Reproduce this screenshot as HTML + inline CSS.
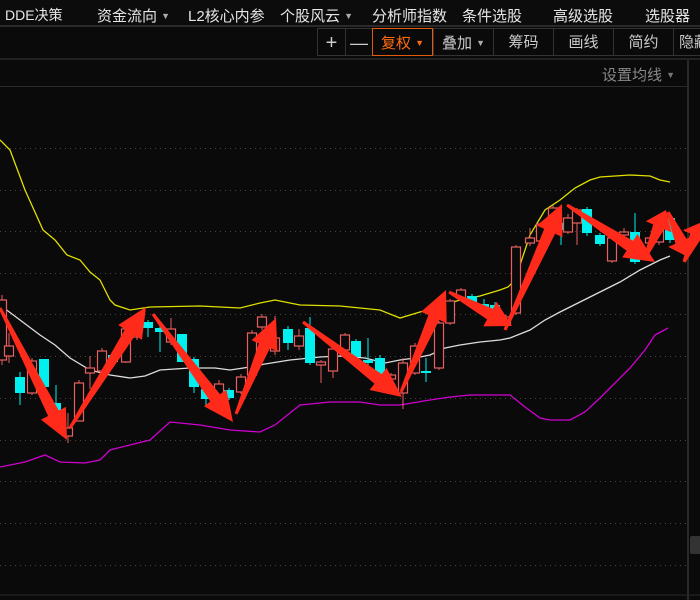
<!DOCTYPE html>
<html><head><meta charset="utf-8"><style>
html,body{margin:0;padding:0;background:#0a0a0a;width:700px;height:600px;overflow:hidden;font-family:"Liberation Sans","Noto Sans CJK SC",sans-serif;}
.top{position:absolute;left:0;top:0;width:700px;height:25px;background:#0c0c0c;border-bottom:2px solid #2a2a2a;}
.top span{position:absolute;top:5px;color:#e6e6e6;font-size:15px;white-space:nowrap;}
.tb{position:absolute;top:28px;height:28px;border:1px solid #333;border-right:none;color:#ccc;font-size:15px;line-height:28px;text-align:center;box-sizing:border-box;}
.tri{font-size:9px;vertical-align:2px;color:#aaa}
</style></head><body>
<div class="top">
<span style="left:5px;font-size:14px">DDE决策</span>
<span style="left:97px">资金流向 <b class="tri">▼</b></span>
<span style="left:188px">L2核心内参</span>
<span style="left:280px">个股风云 <b class="tri">▼</b></span>
<span style="left:372px">分析师指数</span>
<span style="left:462px">条件选股</span>
<span style="left:553px">高级选股</span>
<span style="left:645px">选股器</span>
</div>
<div class="tb" style="left:317px;width:28px;font-size:20px">+</div>
<div class="tb" style="left:345px;width:27px;font-size:18px">—</div>
<div class="tb" style="left:372px;width:61px;border:1px solid #e05a10;color:#ff6a10">复权 <b class="tri" style="color:#ff6a10">▼</b></div>
<div class="tb" style="left:433px;width:60px">叠加 <b class="tri">▼</b></div>
<div class="tb" style="left:493px;width:60px">筹码</div>
<div class="tb" style="left:553px;width:60px">画线</div>
<div class="tb" style="left:613px;width:60px">简约</div>
<div class="tb" style="left:673px;width:40px;text-align:left;padding-left:5px">隐藏</div>
<div style="position:absolute;left:0;top:58px;width:700px;height:2px;background:#222"></div>
<div style="position:absolute;left:602px;top:64px;color:#888;font-size:15px">设置均线 <b class="tri" style="color:#777">▼</b></div>
<div style="position:absolute;left:0;top:86px;width:688px;height:1px;background:#2a2a2a"></div>
<svg id="c" width="700" height="600" style="position:absolute;left:0;top:0" xmlns="http://www.w3.org/2000/svg">
<line x1="688" y1="60" x2="688" y2="600" stroke="#2a2a2a" stroke-width="2"/>
<line x1="0" y1="595" x2="700" y2="595" stroke="#2a2a2a" stroke-width="1"/>
<rect x="690" y="536" width="12" height="18" rx="2" fill="#333"/>
<g id="grid" stroke="#444" stroke-width="1" stroke-dasharray="1,4"></g>
<polyline fill="none" stroke="#e0e000" stroke-width="1.3" points="0,140 10,150 25,190 43,230 55,240 67,255 80,260 90,272 100,280 110,300 115,305 130,310 150,307 200,306 240,308 260,303 275,300 300,305 340,306 380,310 400,318 420,312 440,306 460,300 480,296 500,290 508,287 515,280 530,235 545,210 560,200 575,188 590,180 600,177 630,175 650,176 660,180 670,182"/>
<polyline fill="none" stroke="#dddddd" stroke-width="1.3" points="0,305 20,320 40,335 55,345 70,358 90,370 110,375 130,378 145,376 160,370 190,368 215,368 230,370 250,367 265,364 290,360 320,357 340,356 365,358 385,363 400,360 415,358 430,355 445,348 460,345 480,342 500,340 510,338 530,330 545,320 560,312 580,302 600,292 620,282 640,270 660,260 670,256"/>
<polyline fill="none" stroke="#d000d0" stroke-width="1.3" points="0,467 25,462 45,455 60,462 85,463 100,460 110,450 130,445 150,440 170,422 200,425 230,430 260,432 275,425 300,405 330,402 360,402 380,405 400,405 430,400 450,397 470,395 500,395 510,395 525,407 540,418 550,420 570,420 585,412 600,398 615,383 630,368 645,350 655,335 668,328"/>
<g id="cd"></g><g id="ar" fill="#ff2a1a"></g>
</svg>
<script>
var ns="http://www.w3.org/2000/svg";
function el(p,t,a){var e=document.createElementNS(ns,t);for(var k in a)e.setAttribute(k,a[k]);document.getElementById(p).appendChild(e);}
[148,190,231,273,314,356,398,440,481,523,565].forEach(function(y){el('grid','line',{x1:0,y1:y+.5,x2:686,y2:y+.5});});
var C=[[2,300,360,295,365,1],[9,346,356,333,363,1],[20,377,393,372,405,0],[32,361,393,358,395,1],[44,359,387,359,387,0],[56,403,423,385,425,0],[68,428,436,413,443,1],[79,383,421,380,421,1],[90,368,373,356,389,1],[102,351,371,348,371,1],[113,355,362,352,365,0],[126,329,362,326,363,1],[137,328,337,324,340,1],[148,322,328,320,337,0],[160,328,332,326,352,0],[171,329,342,318,345,1],[182,334,362,334,362,0],[194,359,387,357,393,0],[206,389,399,386,407,0],[219,384,399,380,400,1],[229,390,398,388,400,0],[241,377,392,374,394,1],[252,333,375,330,378,1],[262,317,327,314,330,1],[275,338,351,316,355,1],[288,329,343,326,350,0],[299,336,346,329,350,1],[310,328,363,317,365,0],[321,362,365,360,383,1],[333,349,371,346,378,1],[345,335,350,333,352,1],[356,341,357,339,360,0],[368,360,363,338,373,0],[380,358,380,355,383,0],[391,375,379,373,381,1],[403,363,393,358,409,1],[415,346,373,343,375,1],[426,371,373,358,382,0],[439,323,368,321,370,1],[450,301,323,299,325,1],[461,290,298,288,300,1],[472,296,302,294,305,0],[484,304,311,299,317,0],[495,305,312,302,314,0],[506,317,325,315,328,1],[516,247,313,245,315,1],[530,238,243,228,246,1],[541,224,241,222,244,1],[553,208,232,205,234,1],[561,223,230,215,245,0],[568,218,232,214,234,1],[577,210,223,208,245,1],[587,209,233,207,236,0],[600,235,244,233,246,0],[612,238,261,236,263,1],[624,232,235,228,237,1],[635,232,262,213,264,0],[650,238,243,236,246,1],[659,222,242,218,245,1],[670,218,240,216,243,0]];
C.forEach(function(c){var x=c[0],t=Math.min(c[1],c[2]),b=Math.max(c[1],c[2]),col=c[5]?'#e86060':'#00f0f0';
el('cd','line',{x1:x,y1:c[3],x2:x,y2:c[4],stroke:col,'stroke-width':1});
if(c[5])el('cd','rect',{x:x-4.5,y:t,width:9,height:Math.max(b-t,2),fill:'#0a0a0a',stroke:col,'stroke-width':1.2});
else el('cd','rect',{x:x-5,y:t,width:10,height:Math.max(b-t,2),fill:col});});
function arrow(x1,y1,x2,y2){var dx=x2-x1,dy=y2-y1,L=Math.hypot(dx,dy),ux=dx/L,uy=dy/L,px=-uy,py=ux,hl=Math.min(30,L*0.35),hw=14,sw=6,b=1.5;
var hx=x2-ux*hl,hy=y2-uy*hl;
var p=[[x1+px*b,y1+py*b],[hx+px*sw,hy+py*sw],[hx+px*hw,hy+py*hw],[x2,y2],[hx-px*hw,hy-py*hw],[hx-px*sw,hy-py*sw],[x1-px*b,y1-py*b]];
el('ar','polygon',{points:p.map(function(q){return q[0].toFixed(1)+','+q[1].toFixed(1)}).join(' ')});}
arrow(0,308,67,440);arrow(70,428,146,307);arrow(153,314,233,422);arrow(236,414,276,318);arrow(303,322,402,397);arrow(401,392,446,290);arrow(449,292,512,326);arrow(505,330,562,204);arrow(567,205,655,262);arrow(645,258,666,210);arrow(668,212,688,257);arrow(684,262,702,222);
</script>
</body></html>
